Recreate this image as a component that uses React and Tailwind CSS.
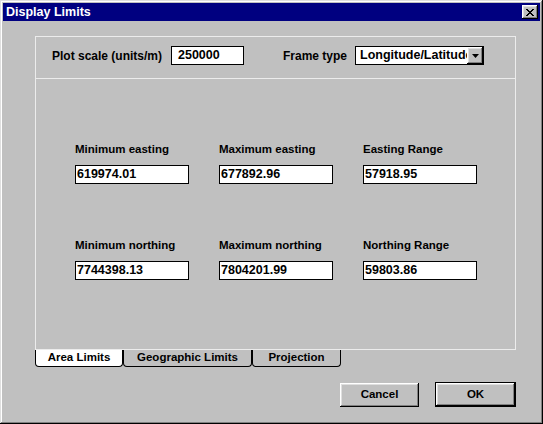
import { useState } from 'react';

const raised = 'shadow-[inset_-1px_-1px_#000,inset_1px_1px_#fff,inset_-2px_-2px_#808080,inset_2px_2px_#dfdfdf]';

function Field({ label, value }) {
    return (
        <div className="flex flex-col w-[114px]">
            <div className="h-[16px] leading-[16px] whitespace-nowrap">{label}</div>
            <div className="mt-[8px] h-[19px] border border-black bg-white pl-[1px] text-[12.5px] leading-[17px]">
                {value}
            </div>
        </div>
    );
}

export default function App() {
    const [tab, setTab] = useState('area');

    const rows = [
        [
            { label: 'Minimum easting', value: '619974.01' },
            { label: 'Maximum easting', value: '677892.96' },
            { label: 'Easting Range', value: '57918.95' },
        ],
        [
            { label: 'Minimum northing', value: '7744398.13' },
            { label: 'Maximum northing', value: '7804201.99' },
            { label: 'Northing Range', value: '59803.86' },
        ],
    ];

    const tabs = [
        { id: 'area', label: 'Area Limits', w: 'w-[88px]' },
        { id: 'geo', label: 'Geographic Limits', w: 'w-[129px]' },
        { id: 'proj', label: 'Projection', w: 'w-[89px]' },
    ];

    return (
        <div
            className="w-[543px] h-[424px] bg-[#c0c0c0] p-[3px] flex flex-col text-black font-bold text-[11.5px] shadow-[inset_-1px_-1px_#000,inset_1px_1px_#dfdfdf,inset_-2px_-2px_#808080,inset_2px_2px_#fff]"
            style={{ fontFamily: '"Liberation Sans", Arial, sans-serif' }}
        >
            {/* Title bar */}
            <div className="h-[18px] bg-[#000080] flex items-center justify-between pl-[3px] pr-[2px]">
                <span className="text-white text-[12.5px] leading-none">Display Limits</span>
                <button className={`w-[16px] h-[14px] bg-[#c0c0c0] flex items-center justify-center ${raised}`}>
                    <svg width="8" height="7" viewBox="0 0 8 7">
                        <path d="M0 0h2v1h1v1h2V1h1V0h2v1H7v1H6v1H5v1h1v1h1v1h1v1H6V6H5V5H3v1H2v1H0V6h1V5h1V4h1V3H2V2H1V1H0z" fill="#000" />
                    </svg>
                </button>
            </div>

            {/* Main frame */}
            <div className="ml-[32px] mt-[15px] w-[481px] h-[314px] border border-[#ececec] flex flex-col">
                <div className="h-[42px] border-b border-[#ececec] flex items-start pt-[9px] pl-[16px]">
                    <div className="w-[119px] h-[19px] flex items-center whitespace-nowrap text-[12px]">Plot scale (units/m)</div>
                    <div className="w-[73px] h-[19px] border border-black bg-white pl-[6px] text-[12.5px] leading-[17px]">250000</div>
                    <div className="ml-[39px] w-[72px] h-[19px] flex items-center whitespace-nowrap text-[12px]">Frame type</div>
                    <div className="w-[129px] h-[19px] border border-black bg-white flex">
                        <div className="flex-1 overflow-hidden whitespace-nowrap pl-[4px] leading-[17px] text-[12.5px]">Longitude/Latitude</div>
                        <div className={`w-[16px] h-[17px] bg-[#c0c0c0] flex items-center justify-center ${raised}`}>
                            <svg width="7" height="4" viewBox="0 0 7 4">
                                <path d="M0 0h7L3.5 4z" fill="#000" />
                            </svg>
                        </div>
                    </div>
                </div>

                <div className="flex-1 flex flex-col pl-[39px] pt-[62px] gap-[53px]">
                    {rows.map((row, i) => (
                        <div key={i} className="flex gap-[30px]">
                            {row.map(f => (
                                <Field key={f.label} label={f.label} value={f.value} />
                            ))}
                        </div>
                    ))}
                </div>
            </div>

            {/* Tabs */}
            <div className="ml-[32px] flex">
                {tabs.map(t => (
                    <button
                        key={t.id}
                        onClick={() => setTab(t.id)}
                        className={`${t.w} h-[17px] border border-t-0 border-black rounded-b-[4px] flex items-center justify-center leading-none ${
                            tab === t.id ? 'bg-white' : 'bg-[#c0c0c0]'
                        }`}
                    >
                        {t.label}
                    </button>
                ))}
            </div>

            {/* Buttons */}
            <div className="mt-[16px] mr-[24px] flex justify-end gap-[16px]">
                <button className={`w-[79px] h-[24px] bg-[#c0c0c0] ${raised}`}>Cancel</button>
                <button className="w-[81px] h-[25px] -mt-px border border-black">
                    <div className={`w-full h-full flex items-center justify-center ${raised}`}>OK</div>
                </button>
            </div>
        </div>
    );
}
